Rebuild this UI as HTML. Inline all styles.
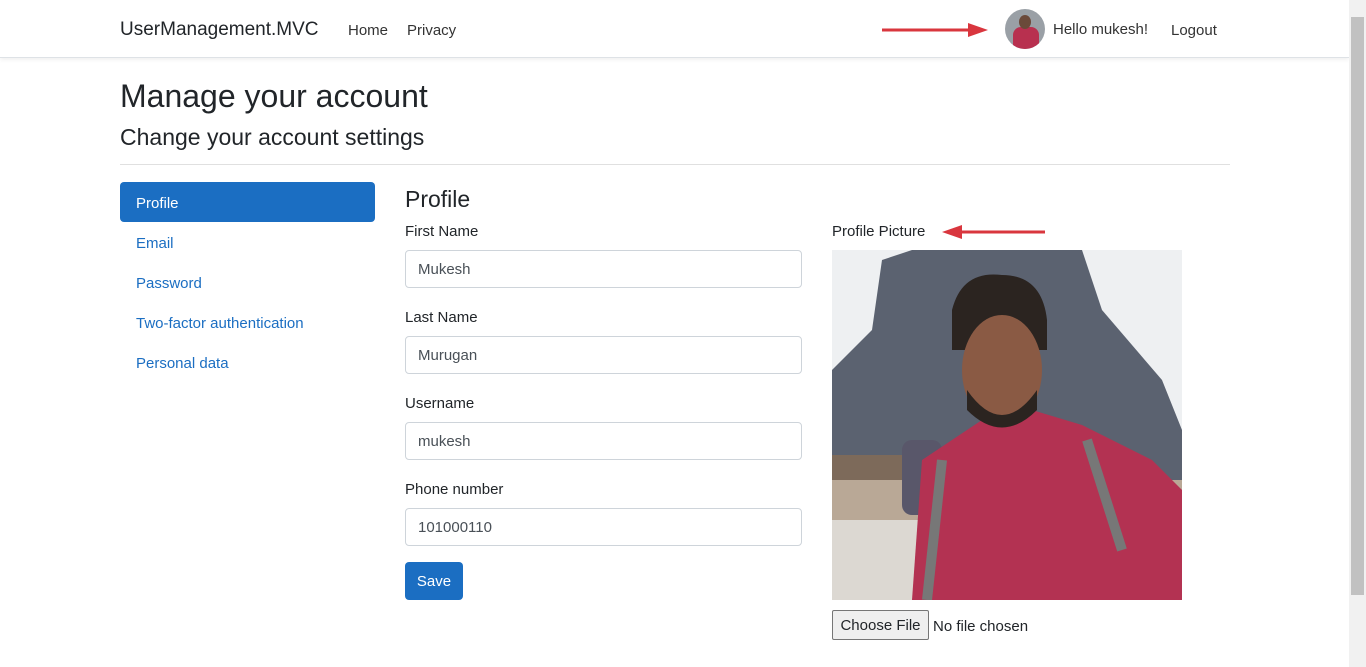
<!DOCTYPE html>
<html><head><meta charset="utf-8"><style>
*{box-sizing:border-box;margin:0;padding:0}
body{width:1366px;height:667px;overflow:hidden;background:#fff;font-family:"Liberation Sans",sans-serif;color:#212529;position:relative}
.a{position:absolute;white-space:nowrap}
.nav{position:absolute;left:0;top:0;width:1349px;height:58px;border-bottom:1px solid #dee2e6;box-shadow:0 2px 4px rgba(0,0,0,.06)}
.inp{position:absolute;left:405px;width:397px;height:38px;border:1px solid #ced4da;border-radius:4px;padding:0 12px;line-height:38px;font-size:15px;color:#495057}
.lbl{position:absolute;left:405px;font-size:15px}
.side{position:absolute;left:136px;font-size:15px;color:#1b6ec2}
</style></head><body>
<div class="nav"></div>
<div class="a" style="left:120px;top:19px;font-size:19px;color:#212529">UserManagement.MVC</div>
<div class="a" style="left:348px;top:22px;font-size:15px;color:#333">Home</div>
<div class="a" style="left:407px;top:22px;font-size:15px;color:#333">Privacy</div>
<svg class="a" style="left:880px;top:20px" width="110" height="20"><line x1="2" y1="10" x2="95" y2="10" stroke="#d9363e" stroke-width="3"/><polygon points="88,3 108,10 88,17" fill="#d9363e"/></svg>
<div class="a" style="left:1005px;top:9px;width:40px;height:40px;border-radius:50%;overflow:hidden;background:#9aa0a6"><div style="position:absolute;left:8px;top:18px;width:26px;height:24px;background:#b8304f;border-radius:8px 8px 0 0"></div><div style="position:absolute;left:14px;top:6px;width:12px;height:14px;background:#6b4a3a;border-radius:50%"></div></div>
<div class="a" style="left:1053px;top:21px;font-size:15px;color:#333">Hello mukesh!</div>
<div class="a" style="left:1171px;top:22px;font-size:15px;color:#333">Logout</div>
<div class="a" style="left:1349px;top:0;width:17px;height:667px;background:#f1f1f1"></div>
<div class="a" style="left:1351px;top:17px;width:13px;height:578px;background:#c1c1c1"></div>
<div class="a" style="left:120px;top:78px;font-size:32px;font-weight:500">Manage your account</div>
<div class="a" style="left:120px;top:124px;font-size:23px;font-weight:500">Change your account settings</div>
<div class="a" style="left:120px;top:164px;width:1110px;height:1px;background:#e0e0e0"></div>
<div class="a" style="left:120px;top:182px;width:255px;height:40px;background:#1b6ec2;border-radius:4px"></div>
<div class="a" style="left:136px;top:195px;font-size:15px;color:#fff">Profile</div>
<div class="side a" style="top:235px">Email</div>
<div class="side a" style="top:275px">Password</div>
<div class="side a" style="top:315px">Two-factor authentication</div>
<div class="side a" style="top:355px">Personal data</div>
<div class="a" style="left:405px;top:186px;font-size:23px;font-weight:500">Profile</div>
<div class="lbl a" style="top:223px">First Name</div><div class="inp" style="top:250px">Mukesh</div>
<div class="lbl a" style="top:309px">Last Name</div><div class="inp" style="top:336px">Murugan</div>
<div class="lbl a" style="top:395px">Username</div><div class="inp" style="top:422px">mukesh</div>
<div class="lbl a" style="top:481px">Phone number</div><div class="inp" style="top:508px">101000110</div>
<div class="a" style="left:405px;top:562px;width:58px;height:38px;background:#1b6ec2;border-radius:4px;color:#fff;font-size:15px;text-align:center;line-height:40px">Save</div>
<div class="a" style="left:832px;top:223px;font-size:15px">Profile Picture</div>
<svg class="a" style="left:940px;top:222px" width="110" height="20"><polygon points="2,10 22,3 22,17" fill="#d9363e"/><line x1="15" y1="10" x2="105" y2="10" stroke="#d9363e" stroke-width="3"/></svg>
<svg class="a" style="left:832px;top:250px" width="350" height="350">
<rect width="350" height="350" fill="#eef0f2"/>
<path d="M0,120 L40,80 L50,10 L80,0 L250,0 L270,60 L330,130 L350,180 L350,230 L0,230Z" fill="#5b6270"/>
<rect x="0" y="205" width="80" height="30" fill="#7d6a5a"/>
<rect x="0" y="230" width="350" height="40" fill="#b9a896"/>
<rect x="0" y="270" width="350" height="80" fill="#dcd8d2"/>
<rect x="70" y="190" width="40" height="75" rx="10" fill="#59576a"/>
<path d="M80,350 L90,210 L150,170 L200,160 L250,175 L320,210 L350,240 L350,350Z" fill="#b33252"/>
<path d="M120,60 Q130,20 170,25 Q210,25 215,70 L215,100 L120,100Z" fill="#2b2420"/>
<ellipse cx="170" cy="120" rx="40" ry="55" fill="#8a5a44"/>
<path d="M135,140 Q170,190 205,140 L205,160 Q170,195 135,160Z" fill="#2b2420"/>
<path d="M110,210 L95,350" stroke="#777" stroke-width="10"/>
<path d="M255,190 L290,300" stroke="#777" stroke-width="10"/>
</svg>
<div class="a" style="left:832px;top:610px;width:97px;height:30px;border:1px solid #767676;border-radius:2px;background:#efefef;font-size:15px;text-align:center;line-height:30px">Choose File</div>
<div class="a" style="left:933px;top:618px;font-size:15px">No file chosen</div>
</body></html>
